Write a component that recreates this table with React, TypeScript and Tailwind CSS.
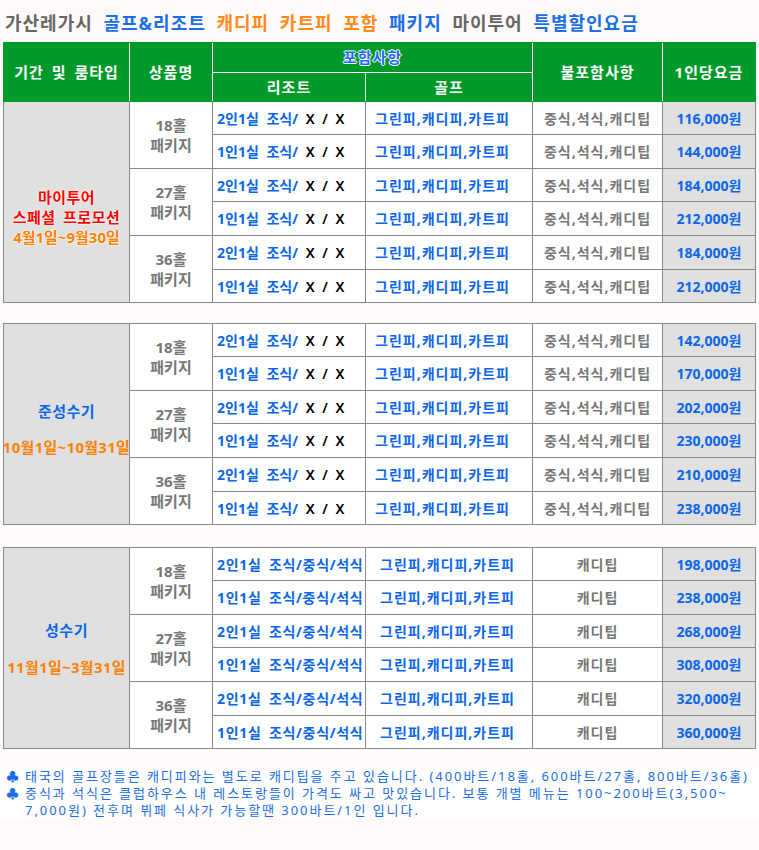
import React from "react";

const COLS = "grid-cols-[125px_82px_152px_166px_129px_92px]";

type Row = { room: string; price: string };

function Cells({
  rows,
  full,
  excl,
  golfPl,
}: {
  rows: Row[];
  full: boolean;
  excl: string;
  golfPl: string;
}) {
  return (
    <>
      {rows.map((r, i) => (
        <React.Fragment key={i}>
          {full ? (
            <div className="bg-white flex items-center pl-[4px] whitespace-pre text-[14px] font-bold [word-spacing:3px] tracking-[0.7px]">
              <span className="text-[#0a66ee]">{r.room} 조식/중식/석식</span>
            </div>
          ) : (
            <div className="bg-white flex items-center pl-[4px] whitespace-pre text-[14px] font-bold [word-spacing:4px]">
              <span className="text-[#0a66ee]">{r.room} 조식/</span>
              <span className="text-black font-semibold"> X / X</span>
            </div>
          )}
          <div className={`bg-white flex items-center ${golfPl} text-[14px] font-bold tracking-[1px] text-[#0a66ee] whitespace-nowrap`}>
            그린피,캐디피,카트피
          </div>
          <div className="bg-white flex items-center justify-center text-[14px] font-bold tracking-[1px] text-[#777777] whitespace-nowrap">
            {excl}
          </div>
          <div className="bg-[#e0e0e0] flex items-center justify-center text-[14px] font-bold text-[#0a66ee] whitespace-nowrap">
            {r.price}
          </div>
        </React.Fragment>
      ))}
    </>
  );
}

function Group({ holes }: { holes: string }) {
  return (
    <div className="row-span-2 bg-white flex flex-col items-center justify-center text-[15px] leading-[20px] font-bold text-[#777777]">
      <span>{holes}</span>
      <span>패키지</span>
    </div>
  );
}

function Body({
  label,
  prices,
  full,
  excl,
  golfPl,
  borderCls,
}: {
  label: React.ReactNode;
  prices: string[];
  full: boolean;
  excl: string;
  golfPl: string;
  borderCls: string;
}) {
  const rows: Row[] = prices.map((p, i) => ({
    room: i % 2 === 0 ? "2인1실" : "1인1실",
    price: p,
  }));
  return (
    <div className={`${borderCls} border-[#888888] bg-[#888888]`}>
      <div
        className={`grid ${COLS} grid-rows-[32px_33px_32px_33px_33px_32px] gap-px`}
      >
        <div className="row-span-6 bg-[#e0e0e0] flex flex-col items-center justify-center overflow-visible">
          {label}
        </div>
        <Group holes="18홀" />
        <Cells rows={rows.slice(0, 2)} full={full} excl={excl} golfPl={golfPl} />
        <Group holes="27홀" />
        <Cells rows={rows.slice(2, 4)} full={full} excl={excl} golfPl={golfPl} />
        <Group holes="36홀" />
        <Cells rows={rows.slice(4, 6)} full={full} excl={excl} golfPl={golfPl} />
      </div>
    </div>
  );
}

function Header() {
  const base =
    "bg-[#009a2a] flex items-center justify-center font-bold text-[15px] tracking-[1px]";
  const cell = `${base} text-white`;
  return (
    <div className="border border-[#009a2a] bg-white">
      <div className={`grid ${COLS} grid-rows-[29px_28px] gap-px`}>
        <div className={`${cell} row-span-2 [word-spacing:3px]`}>기간 및 룸타입</div>
        <div className={`${cell} row-span-2`}>상품명</div>
        <div
          className={`${base} col-span-2 text-[#1a6cff] [text-shadow:1px_0_0_#fff,-1px_0_0_#fff,0_1px_0_#fff,0_-1px_0_#fff]`}
        >
          포함사항
        </div>
        <div className={`${cell} row-span-2`}>불포함사항</div>
        <div className={`${cell} row-span-2`}>1인당요금</div>
        <div className={cell}>리조트</div>
        <div className={cell}>골프</div>
      </div>
    </div>
  );
}

export default function App() {
  return (
    <div className="w-[759px] h-[850px] bg-[#fffafa] font-['Noto_Sans','Noto_Sans_CJK_KR',sans-serif]">
      <div className="h-[42px] flex items-center pl-[5px] pt-[5px] text-[18px] font-bold tracking-[1px] [word-spacing:5px] whitespace-nowrap">
        <span className="text-[#666666]">가산레가시</span>&nbsp;
        <span className="text-[#1a6ee8]">골프&amp;리조트</span>&nbsp;
        <span className="text-[#ff8a1a]">캐디피 카트피 포함</span>&nbsp;
        <span className="text-[#1a6ee8]">패키지</span>&nbsp;
        <span className="text-[#666666]">마이투어</span>&nbsp;
        <span className="text-[#1a6ee8]">특별할인요금</span>
      </div>

      <div className="ml-[3px] w-[753px]">
        <Header />
        <Body
          borderCls="border-x border-b"
          label={
            <div className="pt-[30px] flex flex-col items-center font-bold text-[15px] leading-[20px] tracking-[0.5px] [text-shadow:0_0_1px_#fff,0_0_2px_#fff,0_0_2px_#fff]">
              <span className="text-[#ff0000]">마이투어</span>
              <span className="text-[#ff0000] [word-spacing:3px]">스페셜 프로모션</span>
              <span className="text-[#ff8000] tracking-[0px]">4월1일~9월30일</span>
            </div>
          }
          prices={["116,000원", "144,000원", "184,000원", "212,000원", "184,000원", "212,000원"]}
          full={false}
          excl="중식,석식,캐디팁"
          golfPl="pl-[9px]"
        />

        <div className="h-[20px]" />
        <Body
          borderCls="border"
          label={
            <div className="pt-[10px] flex flex-col items-center font-bold text-[15px] leading-[20px] whitespace-nowrap">
              <span className="text-[#0a66ee] tracking-[0.5px]">준성수기</span>
              <span className="h-[16px]" />
              <span className="text-[#ff8000] tracking-[0.3px]">10월1일~10월31일</span>
            </div>
          }
          prices={["142,000원", "170,000원", "202,000원", "230,000원", "210,000원", "238,000원"]}
          full={false}
          excl="중식,석식,캐디팁"
          golfPl="pl-[9px]"
        />

        <div className="h-[22px]" />
        <Body
          borderCls="border"
          label={
            <div className="flex flex-col items-center font-bold text-[15px] leading-[20px] whitespace-nowrap">
              <span className="text-[#0a66ee] tracking-[0.5px]">성수기</span>
              <span className="h-[17px]" />
              <span className="text-[#ff8000] tracking-[0.3px]">11월1일~3월31일</span>
            </div>
          }
          prices={["198,000원", "238,000원", "268,000원", "308,000원", "320,000원", "360,000원"]}
          full={true}
          excl="캐디팁"
          golfPl="pl-[14px]"
        />
      </div>

      <div className="mt-[19px] bg-white pl-[6px] text-[13px] leading-[17px] text-[#1a6ee8] tracking-[1.95px] whitespace-nowrap">
        <div className="flex">
          <span className="w-[19px] shrink-0 tracking-normal">♣</span>
          <span>
            태국의 골프장들은 캐디피와는 별도로 캐디팁을 주고 있습니다. (400바트/18홀, 600바트/27홀, 800바트/36홀)
          </span>
        </div>
        <div className="flex">
          <span className="w-[19px] shrink-0 tracking-normal">♣</span>
          <span>
            중식과 석식은 클럽하우스 내 레스토랑들이 가격도 싸고 맛있습니다. 보통 개별 메뉴는 100~200바트(3,500~
            <br />
            7,000원) 전후며 뷔페 식사가 가능할땐 300바트/1인 입니다.
          </span>
        </div>
      </div>
    </div>
  );
}
